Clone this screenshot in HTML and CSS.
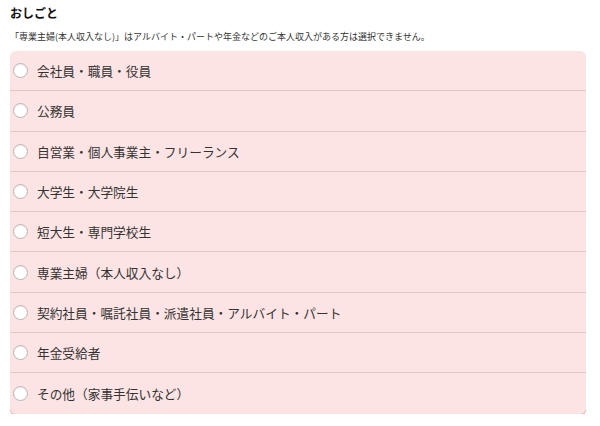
FILE: index.html
```html
<!DOCTYPE html>
<html lang="ja">
<head>
<meta charset="utf-8">
<link rel="stylesheet" href="styles.css">
</head>
<body>
<div class="wrap">
  <h2 class="title">おしごと</h2>
  <p class="note">「専業主婦(本人収入なし)」はアルバイト・パートや年金などのご本人収入がある方は選択できません。</p>
  <ul class="list">
    <li class="item"><span class="radio"></span><span class="label">会社員・職員・役員</span></li>
    <li class="item"><span class="radio"></span><span class="label">公務員</span></li>
    <li class="item"><span class="radio"></span><span class="label">自営業・個人事業主・フリーランス</span></li>
    <li class="item"><span class="radio"></span><span class="label">大学生・大学院生</span></li>
    <li class="item"><span class="radio"></span><span class="label">短大生・専門学校生</span></li>
    <li class="item"><span class="radio"></span><span class="label">専業主婦（本人収入なし）</span></li>
    <li class="item"><span class="radio"></span><span class="label">契約社員・嘱託社員・派遣社員・アルバイト・パート</span></li>
    <li class="item"><span class="radio"></span><span class="label">年金受給者</span></li>
    <li class="item"><span class="radio"></span><span class="label">その他（家事手伝いなど）</span></li>
  </ul>
</div>
</body>
</html>
```
FILE: styles.css
```css
html, body {
  margin: 0;
  padding: 0;
  background: #fff;
}
body {
  font-family: "Noto Sans CJK JP", "Noto Sans", sans-serif;
  color: #222;
}
.wrap {
  padding: 4px 14px 0 10px;
}
.title {
  margin: 0;
  font-size: 12px;
  font-weight: bold;
  line-height: 18px;
  color: #111;
}
.note {
  margin: 8px 0 0 0;
  font-size: 9px;
  line-height: 14px;
  color: #333;
}
.list {
  list-style: none;
  margin: 7px 0 0 0;
  padding: 0;
  background: #fce4e4;
  border-radius: 6px;
  box-shadow: 0 2px 0 #e3b9b9;
}
.item {
  display: flex;
  align-items: center;
  height: 40.3px;
  padding-left: 3px;
  border-bottom: 1px solid #e2c6c6;
  box-sizing: border-box;
}
.item:last-child {
  border-bottom: none;
  height: 41px;
}
.radio {
  width: 13px;
  height: 13px;
  border-radius: 50%;
  background: #fff;
  border: 1px solid #bdb2b2;
  box-shadow: inset 0 1px 1px rgba(0,0,0,0.08);
  flex: none;
}
.label {
  margin-left: 9px;
  font-size: 12.7px;
  color: #333;
}
```
